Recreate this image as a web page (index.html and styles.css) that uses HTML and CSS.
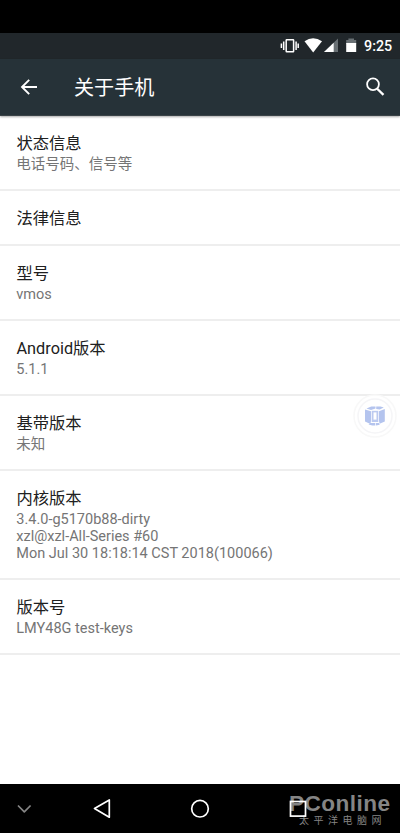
FILE: index.html
```html
<!DOCTYPE html>
<html lang="zh-CN">
<head>
<meta charset="utf-8">
<title>关于手机</title>
<link rel="stylesheet" href="styles.css">
</head>
<body>
<div class="screen">
  <div class="cutout"></div>
  <div class="status">
    <svg class="status-icons" width="84" height="26" viewBox="0 0 84 26">
      <g fill="none" stroke="#fff" stroke-width="1.5">
        <rect x="7.2" y="6.7" width="7.4" height="12" rx=".5"/>
        <path d="M4.7 8.5v8.5M2.4 10.5v4.5M17.1 8.5v8.5M19.2 10.5v4.5"/>
      </g>
      <path fill="#fff" d="M25.5 8.3Q34 2 43 8.3L34.2 19.5Z"/>
      <path fill="#697074" d="M59 5.5V19H45Z"/>
      <path fill="#fff" d="M54.7 9.7V19H45Z"/>
      <path fill="#697074" d="M67.2 7h2.2V5.5H75V7h2.2v4h-10Z"/>
      <path fill="#fff" d="M67.2 10h10v9h-10Z"/>
    </svg>
    <span class="clock">9:25</span>
  </div>
  <header class="bar">
    <svg class="back" width="20" height="20" viewBox="0 0 20 20" fill="none" stroke="#fff" stroke-width="1.9"><path d="M18 10H3M10.2 2.8 3 10l7.2 7.2"/></svg>
    <h1>关于手机</h1>
    <svg class="search" width="20" height="20" viewBox="0 0 20 20" fill="none" stroke="#fff"><circle cx="8" cy="7.3" r="5.9" stroke-width="1.8"/><path d="m12.2 11.7 6.3 6.2" stroke-width="2.3"/></svg>
  </header>
  <main class="list">
    <div class="row"><div class="title">状态信息</div><div class="sub">电话号码、信号等</div></div>
    <div class="row single"><div class="title">法律信息</div></div>
    <div class="row"><div class="title">型号</div><div class="sub">vmos</div></div>
    <div class="row"><div class="title">Android版本</div><div class="sub">5.1.1</div></div>
    <div class="row"><div class="title">基带版本</div><div class="sub">未知</div></div>
    <div class="row"><div class="title">内核版本</div><div class="sub">3.4.0-g5170b88-dirty<br>xzl@xzl-All-Series #60<br>Mon Jul 30 18:18:14 CST 2018(100066)</div></div>
    <div class="row"><div class="title">版本号</div><div class="sub">LMY48G test-keys</div></div>
  </main>
  <nav class="nav">
    <svg width="320" height="49" viewBox="0 0 320 49" fill="none" stroke="#fff" stroke-width="1.7" stroke-linejoin="round">
      <path stroke="#858585" d="m18 21.5 6.3 6.3 6.3-6.3"/>
      <path d="M94.5 24.5 109.3 16v17.2Z"/>
      <circle cx="200" cy="24.7" r="8.3"/>
    </svg>
  </nav>
  <div class="watermark"><div class="brand">PConline</div><div class="brand-cn">太平洋电脑网</div></div>
  <svg class="recent" width="18" height="18" viewBox="0 0 18 18" fill="none" stroke="#fff" stroke-width="1.7"><rect x="1.5" y="1.5" width="15" height="14.6"/></svg>
  <svg class="float" width="46" height="46" viewBox="0 0 46 46">
    <circle cx="23" cy="23" r="21" fill="#fff" stroke="#f8f8f8" stroke-width="1.5"/>
    <circle cx="23" cy="23" r="17" fill="#fff" stroke="#f5f5f7" stroke-width="1.5"/>
    <g fill="#b4c4ee">
      <path d="m13 16.5 6 1.8v9.7l-.6 3-5.4-2.4ZM32.8 16 27 18.3V28l.6 2.8 5.2-2.4ZM14.5 15.4l4.7-2h4.3v2.2l-4.5 1.4ZM24.2 13.4h4.3l3.3 1.2-4.1 2-3.5-.6ZM16.5 31.5l2.3-1.6h4.5v2.7h-3ZM24 29.9h2.8l1 1.8-3.8.9Z"/>
      <path fill="#bccaf0" d="M19.7 17.8h6.6v11.2h-6.6Z"/>
      <path fill="#fff" d="M21.5 19.4h3v7.2h-3Z"/>
    </g>
  </svg>
</div>
</body>
</html>
```
FILE: styles.css
```css
* { box-sizing: border-box; }
body {
  margin: 0;
  background: #fff;
  font-family: Roboto, "Noto Sans CJK SC", sans-serif;
}
.screen {
  position: relative;
  display: flex;
  flex-direction: column;
  width: 400px;
  height: 833px;
  overflow: hidden;
}
.cutout { height: 33px; background: #000; }
.status {
  display: flex;
  align-items: center;
  justify-content: flex-end;
  height: 26px;
  padding-right: 8px;
  background: #21272b;
  color: #fff;
}
.status-icons { margin-right: 1px; }
.clock {
  width: 28px;
  font-size: 14.3px;
  font-weight: 500;
  line-height: 26px;
  white-space: nowrap;
}
.bar {
  display: flex;
  align-items: center;
  height: 57px;
  padding: 0 15px 0 19px;
  background: #263238;
  border-bottom: 1px solid #3a4347;
  box-shadow: 0 1px 2px #0005;
  color: #fff;
  z-index: 1;
}
.bar h1 {
  flex: 1;
  margin: 1px 0 0 35px;
  font-size: 20.1px;
  font-weight: 400;
  line-height: 30px;
}
.list { flex: 1; }
.row {
  padding: 16px;
  border-bottom: 2px solid #eee;
}
.row.single { padding: 16px 16px 14px; }
.title {
  height: 24px;
  padding-left: .5px;
  color: #202020;
  font-size: 16.3px;
  line-height: 23px;
}
.row.single .title { height: 23px; }
.sub {
  padding-left: .3px;
  color: #757575;
  font-size: 14.5px;
  line-height: 17px;
}
.nav { height: 49px; background: #000; }
.nav svg { display: block; }
.watermark {
  position: absolute;
  left: 289px;
  top: 793px;
  width: 108px;
  color: #858585;
}
.brand {
  font: bold 22.6px/22px "Liberation Sans", sans-serif;
  letter-spacing: .45px;
  white-space: nowrap;
}
.brand-cn {
  margin: 0 0 0 10px;
  font-size: 10px;
  line-height: 11px;
  letter-spacing: 4.5px;
  white-space: nowrap;
}
.recent {
  position: absolute;
  left: 289px;
  top: 800px;
}
.float {
  position: absolute;
  left: 352px;
  top: 393px;
}
```
